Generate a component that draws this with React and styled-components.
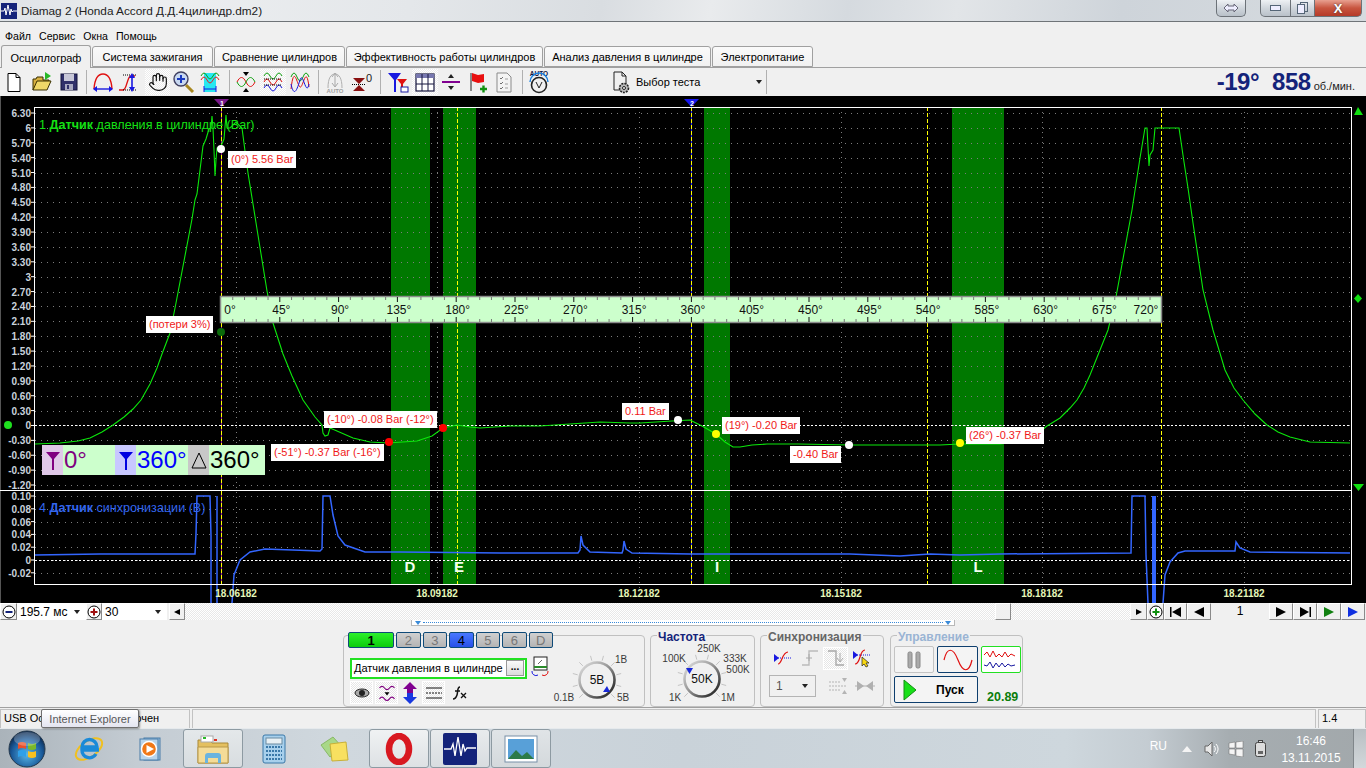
import React from "react";
import styled, { createGlobalStyle } from "styled-components";
import { Hand } from "lucide-react";

const GlobalStyle = createGlobalStyle`
  html, body { margin: 0; padding: 0; background: #f0f0f0; }
  body { font-family: "Liberation Sans", Arial, sans-serif; font-size: 11px; color: #000; overflow: hidden; }
  * { box-sizing: border-box; }
  svg { display: block; }
`;

const Window = styled.div`
  width: 1366px;
  height: 768px;
  display: flex;
  flex-direction: column;
  position: relative;
  overflow: hidden;
  background: #f0f0f0;
`;

// * Title bar
const TitleBar = styled.div`
  height: 22px;
  display: flex;
  align-items: flex-start;
  border-bottom: 1px solid #6f7478;
  background: linear-gradient(100deg, #dfe3e7 0%, #eceef0 12%, #e4e7ea 30%, #d9dde1 44%, #e9ebed 52%, #d5dadf 62%, #e2e5e8 70%, #ced4da 82%, #d6dbdf 100%);
`;
const AppLogo = styled.div`
  width: 16px;
  height: 16px;
  margin: 3px 4px 0 1px;
  background: #14237a;
`;
const TitleText = styled.div`
  flex: 1;
  font-size: 11.8px;
  line-height: 22px;
  color: #222;
`;
const GlassBtn = styled.div`
  height: 17px;
  width: ${(p) => p.$w}px;
  display: flex;
  align-items: center;
  justify-content: center;
  background: ${(p) => p.$close
    ? "linear-gradient(#e8a090, #c8553f 50%, #b53a28)"
    : "linear-gradient(#eef1f4, #d0d6dc 50%, #b9c1c9)"};
  border: 1px solid #6c7278;
  border-top: 0;
  border-left-width: ${(p) => (p.$joined ? 0 : 1)}px;
  border-radius: ${(p) => p.$radius || "0 0 4px 4px"};
  color: #fff;
  font-size: 13px;
  font-weight: 700;
  text-shadow: 0 0 2px #333;
`;
const Gap = styled.div`
  width: ${(p) => p.$w}px;
  flex: none;
`;

// * Menu + tabs
const MenuBar = styled.div`
  height: 23px;
  display: flex;
  align-items: center;
  padding: 4px 0 0 5px;
  gap: 8px;
  font-size: 10.6px;
`;
const TabRow = styled.div`
  height: 23px;
  display: flex;
  align-items: flex-end;
  padding-left: 1px;
  gap: 1px;
  border-bottom: 1px solid #a0a0a0;
`;
const Tab = styled.div`
  width: ${(p) => p.$w}px;
  height: ${(p) => (p.$active ? 23 : 21)}px;
  margin-bottom: ${(p) => (p.$active ? -1 : 0)}px;
  display: flex;
  align-items: center;
  justify-content: center;
  padding-top: 1px;
  font-size: 11px;
  background: ${(p) => (p.$active ? "#f0f0f0" : "linear-gradient(#fafafa, #f1f1f1)")};
  border: 1px solid #a0a0a0;
  border-bottom: ${(p) => (p.$active ? "0" : "1px solid #a0a0a0")};
  border-radius: 3px 3px 0 0;
  position: relative;
`;

// * Toolbar
const Toolbar = styled.div`
  height: 28px;
  display: flex;
  align-items: center;
  background: #f0f0f0;
`;
const ToolBtn = styled.div`
  width: ${(p) => p.$w}px;
  margin-left: ${(p) => p.$ml || 0}px;
  height: 26px;
  flex: none;
  display: flex;
  align-items: center;
  justify-content: center;
  background: ${(p) => (p.$on ? "repeating-conic-gradient(#fff 0 25%, #ececec 0 50%) 0 0 / 2px 2px" : "transparent")};
`;
const ToolSep = styled.div`
  width: ${(p) => p.$w || 10}px;
  height: 24px;
  flex: none;
  position: relative;
  &::after {
    content: "";
    position: absolute;
    left: 50%;
    top: 0;
    bottom: 0;
    border-left: 1px solid #b0b0b0;
  }
`;
const TestSelect = styled.div`
  width: 158px;
  margin-left: 56px;
  display: flex;
  align-items: center;
  gap: 3px;
  padding-left: 2px;
  font-size: 11px;
`;
const Caret = styled.div`
  margin-left: ${(p) => p.$ml || 0}px;
  border-left: 3px solid transparent;
  border-right: 3px solid transparent;
  border-top: 4px solid #222;
`;
const Rpm = styled.div`
  margin-left: auto;
  padding-right: 11px;
  display: flex;
  align-items: baseline;
  color: #14237a;
  font-size: 24px;
  font-weight: 700;
  letter-spacing: -0.5px;
`;
const RpmUnit = styled.span`
  font-size: 11px;
  font-weight: 400;
  letter-spacing: 0;
  margin-left: 3px;
  color: #222;
`;
const RpmValue = styled.span`
  margin-left: ${(p) => p.$ml || 0}px;
`;

// * Oscilloscope canvas
const Scope = styled.div`
  height: 507px;
  position: relative;
  background: #000;
  flex: none;
  border-left: 1px solid #555;
`;
const ChartSvg = styled.svg`
  position: absolute;
  left: -1px;
  top: 0;
`;
const Placed = styled.div.attrs((p) => ({ style: { left: p.$x - 1, top: p.$y - 96 } }))`
  position: absolute;
  white-space: nowrap;
`;
const AxisLabel = styled(Placed)`
  width: 31px;
  text-align: right;
  transform: translateY(-50%);
  font-size: 10px;
  font-weight: 700;
  color: #c9d2dc;
`;
const TimeLabel = styled(Placed)`
  transform: translate(-50%, -50%);
  font-size: 10px;
  font-weight: 700;
  color: #e4f6b8;
`;
const ChannelTitle = styled(Placed)`
  transform: translateY(-50%);
  font-size: 12.6px;
  color: ${(p) => p.$color};
`;
const BandLetter = styled(Placed)`
  transform: translate(-50%, -50%);
  font-size: 15px;
  font-weight: 700;
  color: #f2fff0;
`;
const Callout = styled(Placed)`
  height: 17px;
  padding: 0 3px;
  line-height: 17px;
  background: #fff;
  color: #f01818;
  font-size: 11px;
`;
const RulerLabel = styled(Placed)`
  transform: translate(-50%, -50%);
  font-size: 12px;
  color: #111;
`;
const MarkerTag = styled(Placed)`
  transform: translateX(-50%);
  font-size: 7px;
  font-weight: 700;
  line-height: 7px;
  color: #fff;
`;
const InfoBox = styled(Placed)`
  display: flex;
  height: 30px;
  width: 223px;
  background: #ccffcc;
  font-size: 24px;
  line-height: 29px;
`;
const InfoIcon = styled.div`
  width: 21px;
  flex: none;
  display: flex;
  align-items: center;
  justify-content: center;
  background: ${(p) => p.$bg};
`;
const InfoValue = styled.div`
  width: ${(p) => p.$w}px;
  flex: none;
  padding-left: 1px;
  color: ${(p) => p.$color};
`;

// * Scroll row
const ScrollRow = styled.div`
  height: 17px;
  flex: none;
  display: flex;
  background: #f0f0f0;
  font-size: 11.2px;
`;
const ScrollBtn = styled.div`
  width: ${(p) => p.$w}px;
  flex: none;
  display: flex;
  align-items: center;
  justify-content: center;
  background: #f0f0f0;
  border-right: 1px solid #8a8a8a;
  border-bottom: 1px solid #8a8a8a;
  border-top: 1px solid #fff;
  border-left: 1px solid #fff;
`;
const ScrollCombo = styled.div`
  width: ${(p) => p.$w}px;
  flex: none;
  display: flex;
  align-items: center;
  justify-content: space-between;
  padding: 0 6px 0 3px;
  background: #fff;
  font-size: 12px;
`;
const Track = styled.div`
  width: ${(p) => p.$w}px;
  flex: none;
  background: repeating-conic-gradient(#e8e8e8 0 25%, #fff 0 50%) 0 0 / 2px 2px;
`;
const PageNum = styled.div`
  width: 58px;
  flex: none;
  text-align: center;
  line-height: 17px;
  font-size: 12px;
  background: #f0f0f0;
`;

// * Control panel
const Controls = styled.div`
  height: 88px;
  flex: none;
  display: flex;
  flex-direction: column;
  border-bottom: 1px solid #a0a0a0;
`;
const BlueStrip = styled.div`
  width: 544px;
  height: 6px;
  margin-left: 411px;
  flex: none;
  display: flex;
  align-items: center;
  justify-content: space-between;
  padding: 0 3px;
  background: #fff;
  border: 1px solid #b8b8b8;
  border-top: 0;
`;
const StripDots = styled.div`
  flex: 1;
  margin: 0 2px;
  border-top: 1px dotted #3a8ad8;
`;
const StripArrow = styled.div`
  border-left: 3px solid transparent;
  border-right: 3px solid transparent;
  border-top: 4px solid #3a8ad8;
`;
const GroupRow = styled.div`
  display: flex;
  margin: 9px 0 0 343px;
`;
const Group = styled.div`
  width: ${(p) => p.$w}px;
  margin-left: ${(p) => p.$ml || 0}px;
  height: 72px;
  flex: none;
  position: relative;
  display: flex;
  border: 1px solid #c0c0c0;
  border-radius: 4px;
`;
const Legend = styled.div`
  position: absolute;
  left: ${(p) => p.$x}px;
  top: -5px;
  padding: 0 1px;
  height: 12px;
  line-height: 12px;
  background: #f0f0f0;
  font-size: 12px;
  font-weight: 700;
  color: ${(p) => p.$color};
`;
const ChannelCol = styled.div`
  width: 209px;
  flex: none;
  padding-left: 4px;
  margin-top: -4px;
  display: flex;
  flex-direction: column;
`;
const ChannelRow = styled.div`
  display: flex;
  gap: 2px;
`;
const ChannelBtn = styled.div`
  width: ${(p) => p.$w || 25}px;
  height: 16px;
  display: flex;
  align-items: center;
  justify-content: center;
  border: 1px solid #0e4a78;
  border-radius: 2px;
  font-size: 13px;
  font-weight: ${(p) => (p.$bold ? 700 : 400)};
  color: ${(p) => p.$ink};
  background: ${(p) => p.$bg};
`;
const ComboRow = styled.div`
  display: flex;
  align-items: center;
  margin: 8px 0 0 2px;
  gap: 3px;
`;
const ChannelCombo = styled.div`
  width: 177px;
  height: 21px;
  display: flex;
  align-items: center;
  justify-content: space-between;
  padding: 0 1px 0 2px;
  background: #fff;
  border: 2px solid #22e022;
  font-size: 11px;
  white-space: nowrap;
`;
const DotsBtn = styled.div`
  width: 18px;
  height: 16px;
  flex: none;
  text-align: center;
  font-size: 10px;
  font-weight: 700;
  line-height: 11px;
  background: linear-gradient(#fafafa, #dcdcdc);
  border: 1px solid #999;
`;
const IconRow = styled.div`
  display: flex;
  align-items: center;
  margin: 1px 0 0 2px;
  gap: 2px;
`;
const IconCell = styled.div`
  width: ${(p) => p.$w || 23}px;
  height: 23px;
  flex: none;
  display: flex;
  align-items: center;
  justify-content: center;
  background: ${(p) => (p.$on ? "repeating-conic-gradient(#fff 0 25%, #e6e6e6 0 50%) 0 0 / 2px 2px" : "transparent")};
  border: ${(p) => (p.$on ? "1px solid #fff" : "0")};
`;
const DialBox = styled.div`
  width: ${(p) => p.$w}px;
  height: ${(p) => p.$h}px;
  flex: none;
  position: relative;
  margin: ${(p) => p.$m};
`;
const DialText = styled.div.attrs((p) => ({ style: { left: p.$x, top: p.$y } }))`
  position: absolute;
  transform: translate(-50%, -50%);
  font-size: ${(p) => p.$size || 10}px;
  color: ${(p) => p.$color || "#3a3a3a"};
  white-space: nowrap;
`;
const SyncCol = styled.div`
  flex: 1;
  display: flex;
  flex-direction: column;
  padding: 11px 0 0 8px;
  gap: 6px;
`;
const SyncRow = styled.div`
  display: flex;
  align-items: center;
  height: 22px;
  gap: ${(p) => p.$gap || 0}px;
`;
const SyncCombo = styled.div`
  width: 47px;
  height: 22px;
  margin-right: 8px;
  display: flex;
  align-items: center;
  justify-content: space-between;
  padding: 0 7px 0 6px;
  border: 1px solid #b4b4b4;
  font-size: 12px;
  color: #555;
`;
const RunCol = styled.div`
  display: flex;
  flex-direction: column;
  padding: 10px 0 0 3px;
  gap: 3px;
`;
const RunRow = styled.div`
  display: flex;
  align-items: flex-end;
  gap: 3px;
`;
const RunBtn = styled.div`
  width: ${(p) => p.$w}px;
  height: 27px;
  display: flex;
  align-items: center;
  justify-content: center;
  background: ${(p) => p.$bg || "#f4f4f4"};
  border: 1px solid ${(p) => p.$border || "#c4c4c4"};
  border-radius: 2px;
`;
const StartBtn = styled(RunBtn)`
  justify-content: flex-start;
  padding-left: 8px;
  gap: 19px;
  font-size: 12px;
  font-weight: 700;
`;
const Timer = styled.div`
  margin: 0 0 -2px 6px;
  font-size: 12.5px;
  font-weight: 700;
  color: #0a7d0a;
  line-height: 15px;
`;

// * Status bar + taskbar
const StatusBar = styled.div`
  height: 20px;
  flex: none;
  display: flex;
  gap: 2px;
  padding-top: 1px;
  font-size: 11px;
`;
const StatusCell = styled.div`
  width: ${(p) => p.$w}px;
  flex: ${(p) => (p.$grow ? 1 : "none")};
  padding: 2px 0 0 3px;
  border: 1px solid #c2c2c2;
  border-bottom: 0;
`;
const Tooltip = styled.div`
  position: absolute;
  left: 41px;
  top: 709px;
  width: 98px;
  height: 19px;
  display: flex;
  align-items: center;
  justify-content: center;
  background: linear-gradient(#fff, #e4e5f0);
  border: 1px solid #6f6f6f;
  border-radius: 2px;
  box-shadow: 1px 1px 2px rgba(0, 0, 0, 0.4);
  color: #575757;
  font-size: 11px;
  z-index: 3;
`;
const Taskbar = styled.div`
  height: 40px;
  flex: none;
  display: flex;
  align-items: stretch;
  gap: 1px;
  border-top: 1px solid #e6eaed;
  background: linear-gradient(90deg, #aab3ba 0%, #c4ccd3 10%, #d0d8de 25%, #c9d2d9 50%, #ced7dd 78%, #c4ccd2 84%, #a6adb1 90%, #a2a8ab 100%);
`;
const StartArea = styled.div`
  width: 58px;
  flex: none;
  display: flex;
  align-items: center;
  padding-left: 8px;
`;
const TaskBtn = styled.div`
  width: 60px;
  flex: none;
  margin-left: ${(p) => p.$ml || 0}px;
  display: flex;
  align-items: center;
  justify-content: center;
  border-radius: 3px;
  border: ${(p) => (p.$open ? "1px solid #8d9aa2" : "1px solid transparent")};
  background: ${(p) => p.$bg || "transparent"};
`;
const Tray = styled.div`
  margin-left: auto;
  display: flex;
  align-items: center;
  color: #fff;
`;
const TrayLang = styled.div`
  font-size: 12px;
  margin-right: 15px;
  margin-top: -6px;
`;
const TrayIcon = styled.div`
  width: ${(p) => p.$w}px;
  display: flex;
  justify-content: center;
`;
const Clock = styled.div`
  width: 80px;
  margin: 2px 0 0 -1px;
  text-align: center;
  font-size: 12px;
  line-height: 17px;
`;
const ShowDesktop = styled.div`
  width: 13px;
  align-self: stretch;
  margin-left: 2px;
  border-left: 1px solid #80868a;
  background: linear-gradient(#b9bfc3, #d3d8db);
`;

// ? Chart data: everything is in page pixels, the svg viewBox starts at y=96
const pressureAxis = ["6.30", "6", "5.70", "5.40", "5.10", "4.80", "4.50", "4.20", "3.90", "3.60", "3.30", "3", "2.70", "2.40", "2.10", "1.80", "1.50", "1.20", "0.90", "0.60", "0.30", "0", "-0.30", "-0.60", "-0.90", "-1.20"];
const syncAxis = ["0.10", "0.08", "0.06", "0.04", "0.02", "0", "-0.02"];
const pressureY = (i) => 113 + i * 14.88;
const syncY = (i) => 496 + i * 12.8;
const gridX = [236, 437, 639, 841, 1042, 1244];
const timeLabels = ["18.06182", "18.09182", "18.12182", "18.15182", "18.18182", "18.21182"];
const bands = [[391, 39], [443, 33], [704, 26], [952, 52]];
const letters = [["D", 410], ["E", 459], ["I", 717], ["L", 978]];

const pressureTrace = "35,444 60,443 78,441 90,438 102,432 113,425 124,417 133,409 141,400 150,384 157,368 162,354 170,333 176,303 192,219 195,200 197,194 203,146 206,139 209,129 211,128 212,116 213,128 214,150 215,176 216,160 217,148 219,147 221,146 224,139 226,115 227,128 230,128 236,122 242,128 245,151 248,173 257,229 267,291 273,323 283,354 292,376 303,400 315,417 322,425 323,433 325,436 328,435 330,428 337,431 353,438 370,442 388,443 417,441 432,436 443,428 457,425 470,427 480,428 510,426 540,426 570,424 600,422 630,423 640,423 672,421 690,420 702,426 716,434 725,442 733,447 740,447 752,445 767,444 798,444 850,445 940,445 960,444 1000,444 1030,440 1047,426 1060,418 1070,408 1077,400 1084,388 1090,375 1100,350 1108,330 1116,297 1132,210 1140,158 1145,128 1147,128 1148,147 1149,166 1150,155 1153,150 1155,128 1179,128 1184,162 1188,188 1193,223 1203,290 1213,330 1225,370 1234,388 1243,400 1255,414 1267,425 1278,432 1290,437 1310,442 1350,443";
const syncTrace = "35,555 100,554 195,554 196,534 197,496 210,496 211,536 211,603";
const syncTrace2 = "217,496 217,603";
const syncTrace3 = "232,603 234,575 240,560 250,552 265,549 320,551 322,549 323,496 330,496 333,515 338,536 345,545 365,552 400,552 500,553 578,553 580,550 581,536 583,545 590,552 622,553 623,550 624,541 626,549 632,553 690,554 800,554 850,554 900,556 930,554 960,555 1000,554 1131,553 1132,496 1145,496 1146,555 1148,603";
const syncTrace4 = "1163,603 1165,575 1170,562 1178,553 1185,551 1235,551 1236,542 1240,548 1250,552 1350,553";

const dots = [[221, 149, "#fff"], [221, 332, "#0a6a0a"], [389, 442, "#f00"], [443, 428, "#f00"], [678, 420, "#fff"], [716, 434, "#ff0"], [849, 445, "#fff"], [960, 443, "#ff0"], [8, 425, "#1fe01f"]];

const callouts = [
  ["(0°) 5.56 Bar", 228, 151],
  ["(потери 3%)", 146, 316],
  ["(-10°) -0.08 Bar (-12°)", 324, 411],
  ["(-51°) -0.37 Bar (-16°)", 271, 444],
  ["0.11 Bar", 622, 403],
  ["(19°) -0.20 Bar", 722, 417],
  ["-0.40 Bar", 790, 446],
  ["(26°) -0.37 Bar", 966, 427],
];

function Oscillogram() {
  const ticks = [];
  for (let i = 1; i < 80; i++) ticks.push(221 + i * 11.76);
  return (
    <ChartSvg width="1366" height="507" viewBox="0 96 1366 507">
      {bands.map(([x, w]) => (
        <rect key={x} x={x} y="107" width={w} height="477" fill="#007800" />
      ))}
      {pressureAxis.map((_, i) => (
        <line key={i} x1="35" x2="1350" y1={Math.round(pressureY(i)) + 0.5} y2={Math.round(pressureY(i)) + 0.5} stroke="#7c7c7c" strokeDasharray="1 5" />
      ))}
      {syncAxis.map((_, i) => (
        <line key={i} x1="35" x2="1350" y1={Math.round(syncY(i)) + 0.5} y2={Math.round(syncY(i)) + 0.5} stroke="#7c7c7c" strokeDasharray="1 5" />
      ))}
      {gridX.map((x) => (
        <line key={x} x1={x + 0.5} x2={x + 0.5} y1="107" y2="590" stroke="#7c7c7c" strokeDasharray="1 4" />
      ))}
      <line x1="35" x2="1350" y1="425.5" y2="425.5" stroke="#fff" strokeDasharray="2 2" />
      <line x1="35" x2="1350" y1="560.5" y2="560.5" stroke="#fff" strokeDasharray="2 2" />
      <line x1="221.5" x2="221.5" y1="107" y2="584" stroke="#9a1aa0" />
      <line x1="691.5" x2="691.5" y1="107" y2="584" stroke="#2020ff" />
      {[221.5, 457.5, 691.5, 927.5, 1161.5].map((x) => (
        <line key={x} x1={x} x2={x} y1="107" y2="584" stroke="#ffff00" strokeDasharray="4 2" />
      ))}
      <polyline points={syncTrace} fill="none" stroke="#3366ff" strokeWidth="1.5" />
      <polyline points={syncTrace2} fill="none" stroke="#3366ff" strokeWidth="1.5" />
      <polyline points={syncTrace3} fill="none" stroke="#3366ff" strokeWidth="1.5" />
      <polyline points={syncTrace4} fill="none" stroke="#3366ff" strokeWidth="1.5" />
      <rect x="1152" y="496" width="4" height="107" fill="#3366ff" />
      <rect x="34" y="107" width="1317" height="477" fill="none" stroke="#fff" transform="translate(0.5 0.5)" />
      <line x1="0" x2="1351" y1="490.5" y2="490.5" stroke="#fff" />
      {pressureAxis.map((_, i) => (
        <line key={i} x1="31" x2="34" y1={pressureY(i)} y2={pressureY(i)} stroke="#fff" />
      ))}
      {syncAxis.map((_, i) => (
        <line key={i} x1="31" x2="34" y1={syncY(i)} y2={syncY(i)} stroke="#fff" />
      ))}
      <polyline points={pressureTrace} fill="none" stroke="#0be80b" strokeWidth="1.1" />
      <rect x="220.5" y="296.5" width="941" height="26" fill="#ccffcc" stroke="#8c8c8c" strokeWidth="1.5" />
      {ticks.map((x, i) => (
        <g key={i} stroke={(i + 1) % 5 === 0 ? "#111" : "#777"}>
          <line x1={x} x2={x} y1="297" y2={(i + 1) % 5 === 0 ? 302 : 300} />
          <line x1={x} x2={x} y1={(i + 1) % 5 === 0 ? 317 : 319} y2="322" />
        </g>
      ))}
      {dots.map(([x, y, c]) => (
        <circle key={x + "-" + y} cx={x} cy={y} r="4" fill={c} />
      ))}
      <polygon points="214,99 229,99 221.5,107" fill="#7a1a8a" />
      <polygon points="684,99 699,99 691.5,107" fill="#1818f0" />
      <polygon points="1358,107 1354,115 1363,115" fill="#10e010" />
      <polygon points="1358,294 1362,298.5 1358,303 1354,298.5" fill="#10e010" />
      <polygon points="1353,484 1364,484 1358.5,491" fill="#10e010" />
    </ChartSvg>
  );
}

const FilterGlyph = ({ color }) => (
  <svg width="16" height="24" viewBox="0 0 16 24">
    <polygon points="1,4 15,4 9,11 9,22 7,22 7,11" fill={color} />
  </svg>
);

// * Toolbar drawings
const S = ({ children, w = 24, h = 24 }) => (
  <svg width={w} height={h} viewBox="0 0 24 24" fill="none">{children}</svg>
);
const wave = (y, a = 3) => `M3 ${y}q3 ${-a * 2} 6 0t6 0t6 0`;

const icons = {
  page: <S><path d="M6 3.5h8l4 4v14H6z" fill="#fff" stroke="#000" /><path d="M14 3.5v4h4" stroke="#000" /></S>,
  open: <S><path d="M3 9h3l1-2h6v3h6v2H8L3 20z" fill="#d8b040" stroke="#3a3000" /><path d="M3 20l4-9h14l-4 9z" fill="#f0d868" stroke="#3a3000" /><polygon points="15,2 21,6 15,10" fill="#28b828" /></S>,
  save: <S><rect x="4" y="4" width="16" height="16" fill="#30306a" stroke="#14143c" /><rect x="7" y="4" width="10" height="7" fill="#c8c8d8" /><rect x="8" y="14" width="8" height="6" fill="#a8a8c0" /><rect x="10" y="15" width="2" height="4" fill="#30306a" /></S>,
  bell: <S><path d="M3 19C4 5 9 4 12 4s8 1 9 15" stroke="#e01010" strokeWidth="1.4" /><path d="M3 19h18" stroke="#1818e0" strokeWidth="1.4" /><path d="M2 19l4-3v6zM22 19l-4-3v6z" fill="#1818e0" /></S>,
  sweep: <S><path d="M2 20h4c4 0 4-14 8-14h4" stroke="#e01010" strokeWidth="1.3" /><path d="M6 5h13M6 20h13" stroke="#000" strokeDasharray="1 1" /><path d="M15 5v15" stroke="#1818e0" strokeWidth="1.6" /><path d="M15 3l3 5h-6zM15 22l3-5h-6z" fill="#1818e0" /></S>,
  hand: <Hand size={20} color="#111" strokeWidth={1.4} />,
  zoom: <S><path d="M15 15l7 7" stroke="#a88820" strokeWidth="3" /><circle cx="10" cy="9" r="7" fill="#c8d8f0" stroke="#404060" strokeWidth="1.4" /><path d="M6 9h8M10 5v8" stroke="#1838c0" strokeWidth="2" /></S>,
  region: <S><rect x="6" y="3" width="12" height="19" fill="#28e8f0" /><path d={wave(6)} stroke="#10a010" /><path d={wave(10)} stroke="#e02020" /><path d="M6 19h12" stroke="#1818e0" /><path d="M6 16v6M18 16v6" stroke="#1818e0" /></S>,
  cross: <S><path d="M3 12c3-6 6-6 9 0s6 6 9 0" stroke="#e01010" /><path d="M3 12c3 6 6 6 9 0s6-6 9 0" stroke="#10a010" /><path d="M9 2h6l-3 4zM9 22h6l-3-4z" fill="#000" /></S>,
  stacked: <S><path d={wave(6)} stroke="#10a010" /><path d={wave(12)} stroke="#e01010" /><path d={wave(18)} stroke="#1818e0" /><path d="M3 9h18M3 15h18" stroke="#000" strokeDasharray="1 1" /></S>,
  overlay: <S><path d={wave(7, 4)} stroke="#10a010" /><path d="M3 19c3-26 6-4 9-2s6-24 9 0" stroke="#e01010" /><path d="M3 14c3 14 6 6 9-4s6 18 9 4" stroke="#1818e0" /></S>,
  auto: <S><path d="M5 18C5 8 8 4 12 4s7 4 7 14" stroke="#b0b0b0" /><path d="M12 4v12M9 7l3-4 3 4M9 13l3 4 3-4" stroke="#a8a8a8" /><text x="12" y="23" fontSize="6" fontFamily="Liberation Sans" fontWeight="700" textAnchor="middle" fill="#a0a0a0">AUTO</text></S>,
  zero: <S><path d="M3 8h12l-6 6zM3 21h12l-6-6z" fill="#8a1010" /><path d="M2 14.5h13" stroke="#000" strokeDasharray="1 1" /><text x="19" y="12" fontSize="11" fontFamily="Liberation Sans" textAnchor="middle" fill="#222">0</text></S>,
  funnel: <S><path d="M2 3h13l-5 7v12H8V10z" fill="#1818e0" /><path d="M11 9h10l-4 5v5h-2v-5z" fill="#e01010" /><rect x="15" y="17" width="7" height="5" fill="#fff" stroke="#1818a0" /></S>,
  table: <S><rect x="3" y="4" width="18" height="17" fill="#fff" stroke="#14143c" strokeWidth="1.2" /><rect x="3" y="4" width="18" height="4" fill="#7878b0" /><path d="M9 4v17M15 4v17M3 14h18" stroke="#14143c" /></S>,
  level: <S><path d="M3 12h18" stroke="#800090" strokeWidth="2" /><path d="M9 8h6l-3-4zM9 16h6l-3 4z" fill="#222" /></S>,
  flag: <S><path d="M6 3v18" stroke="#222" /><path d="M7 3l6 2 6-1v8l-6 1-6-2z" fill="#e81010" /><path d="M15 19h7M18.5 15.5v7" stroke="#109010" strokeWidth="2.4" /></S>,
  sheet: <S><path d="M5 3h10l4 4v15H5z" fill="#f4f4f4" stroke="#8a8a8a" /><path d="M8 8l1 1 2-2M8 13l1 1 2-2M8 18l1 1 2-2" stroke="#707070" /><path d="M13 9h3M13 14h3M13 18h3" stroke="#a0a0a0" /></S>,
  gauge: <S><text x="12" y="6" fontSize="6.5" fontFamily="Liberation Sans" fontWeight="700" textAnchor="middle" fill="#14143c">AUTO</text><circle cx="12" cy="15" r="7.5" stroke="#222" strokeWidth="1.6" /><path d="M3 12a9 9 0 0 1 18 0" stroke="#1880e0" strokeWidth="1.4" /><path d="M9 12l3 6 3-6" stroke="#222" /></S>,
  testPage: <S><path d="M5 2h8l4 4v9M5 2v18h6M13 2v4h4" stroke="#222" /><circle cx="15" cy="18" r="4.5" fill="#bbb" stroke="#222" strokeDasharray="2 1" strokeWidth="1.6" /><circle cx="15" cy="18" r="1.5" fill="#fff" stroke="#222" /></S>,
};

const toolbarLayout = [
  ["page", 28], ["open", 27], ["save", 27], null,
  ["bell", 26], ["sweep", 26], ["hand", 25, true, 3], ["zoom", 26], ["region", 28], null,
  ["cross", 24, false, 0], ["stacked", 26, true, 2], ["overlay", 26, false, 1], null,
  ["auto", 24], ["zero", 27, false, 1], null,
  ["funnel", 26], ["table", 26, true, 1], ["level", 25], ["flag", 26, false, 1], ["sheet", 26, false, 1], null,
  ["gauge", 24],
];

function Dial({ w, h, cx, cy, value, pointer, labels, m }) {
  const ticks = [];
  for (let a = 135; a <= 405; a += 30) {
    const r = (a * Math.PI) / 180;
    ticks.push([cx + Math.cos(r) * 20, cy + Math.sin(r) * 20, cx + Math.cos(r) * 25, cy + Math.sin(r) * 25]);
  }
  return (
    <DialBox $w={w} $h={h} $m={m}>
      <svg width={w} height={h}>
        <defs>
          <linearGradient id={`ring${cx}`} x1="0" y1="0" x2="1" y2="1">
            <stop offset="0" stopColor="#e4e4e4" />
            <stop offset="0.45" stopColor="#999" />
            <stop offset="1" stopColor="#111" />
          </linearGradient>
        </defs>
        {ticks.map((t, i) => (
          <line key={i} x1={t[0]} y1={t[1]} x2={t[2]} y2={t[3]} stroke="#c4c4c4" />
        ))}
        <circle cx={cx} cy={cy} r="17.5" fill="#f0f0f0" stroke={`url(#ring${cx})`} strokeWidth="2.6" />
        <polygon points={pointer} fill="#1828d8" />
      </svg>
      <DialText $x={cx} $y={cy} $size={12} $color="#111">{value}</DialText>
      {labels.map(([t, x, y]) => (
        <DialText key={t} $x={x} $y={y}>{t}</DialText>
      ))}
    </DialBox>
  );
}

const Play = ({ color = "#000", w = 10, h = 10 }) => (
  <svg width={w} height={h} viewBox="0 0 10 10"><polygon points="0,0 10,5 0,10" fill={color} /></svg>
);
const Back = ({ w = 10 }) => (
  <svg width={w} height="10" viewBox="0 0 10 10"><polygon points="10,0 0,5 10,10" fill="#000" /></svg>
);
const First = () => (
  <svg width="11" height="10" viewBox="0 0 11 10"><rect width="1.5" height="10" fill="#000" /><polygon points="11,0 2,5 11,10" fill="#000" /></svg>
);
const Last = () => (
  <svg width="11" height="10" viewBox="0 0 11 10"><rect x="9.5" width="1.5" height="10" fill="#000" /><polygon points="0,0 9,5 0,10" fill="#000" /></svg>
);
const RoundBtn = ({ color, plus }) => (
  <svg width="14" height="14" viewBox="0 0 14 14">
    <circle cx="7" cy="7" r="6" fill="#fff" stroke="#000" />
    <path d={plus ? "M3.5 7h7M7 3.5v7" : "M3.5 7h7"} stroke={color} strokeWidth="2" />
  </svg>
);

export default function App() {
  return (
    <Window>
      <GlobalStyle />
      <TitleBar>
        <AppLogo>
          <svg width="16" height="16" viewBox="0 0 16 16"><path d="M0 8h3l1-3 1 7 2-10 2 10 1-6 1 3 1-1h4" stroke="#fff" fill="none" /></svg>
        </AppLogo>
        <TitleText>Diamag 2 (Honda Accord Д.Д.4цилиндр.dm2)</TitleText>
        <GlassBtn $w={30} $radius="0 0 5px 5px">
          <svg width="16" height="10" viewBox="0 0 16 10"><path d="M1 5l4-4v2h6V1l4 4-4 4V7H5v2z" fill="#eef" stroke="#667" /></svg>
        </GlassBtn>
        <Gap $w={14} />
        <GlassBtn $w={31} $radius="0 0 0 5px">
          <svg width="11" height="7"><rect x="0.5" y="0.5" width="10" height="5" fill="#eef" stroke="#567" /></svg>
        </GlassBtn>
        <GlassBtn $w={24} $joined $radius="0">
          <svg width="11" height="12"><rect x="3.5" y="0.5" width="7" height="9" fill="none" stroke="#567" /><rect x="0.5" y="2.5" width="7" height="9" fill="#eef" stroke="#567" /></svg>
        </GlassBtn>
        <GlassBtn $w={47} $joined $close $radius="0 0 5px 0">X</GlassBtn>
        <Gap $w={4} />
      </TitleBar>

      <MenuBar>
        <span>Файл</span><span>Сервис</span><span>Окна</span><span>Помощь</span>
      </MenuBar>

      <TabRow>
        <Tab $w={90} $active>Осциллограф</Tab>
        <Tab $w={121}>Система зажигания</Tab>
        <Tab $w={131}>Сравнение цилиндров</Tab>
        <Tab $w={197}>Эффективность работы цилиндров</Tab>
        <Tab $w={167}>Анализ давления в цилиндре</Tab>
        <Tab $w={101}>Электропитание</Tab>
      </TabRow>

      <Toolbar>
        {toolbarLayout.map((item, i) =>
          item === null ? (
            <ToolSep key={i} $w={i === 3 ? 8 : 10} />
          ) : (
            <ToolBtn key={i} $w={item[1]} $on={item[2]} $ml={item[3]}>
              {icons[item[0]]}
            </ToolBtn>
          )
        )}
        <TestSelect>
          {icons.testPage}
          <span>Выбор теста</span>
          <Caret $ml={53} />
        </TestSelect>
        <ToolSep $w={2} />
        <Rpm>
          <span>-19°</span>
          <RpmValue $ml={13}>858</RpmValue>
          <RpmUnit>об./мин.</RpmUnit>
        </Rpm>
      </Toolbar>

      <Scope>
        <Oscillogram />
        {pressureAxis.map((t, i) => (
          <AxisLabel key={t} $x={0} $y={pressureY(i)}>{t}</AxisLabel>
        ))}
        {syncAxis.map((t, i) => (
          <AxisLabel key={t} $x={0} $y={syncY(i)}>{t}</AxisLabel>
        ))}
        {timeLabels.map((t, i) => (
          <TimeLabel key={t} $x={gridX[i]} $y={593}>{t}</TimeLabel>
        ))}
        <ChannelTitle $x={39} $y={125} $color="#14e014">1 <b>Датчик</b> давления в цилиндре (Bar)</ChannelTitle>
        <ChannelTitle $x={39} $y={508} $color="#3366ee">4 <b>Датчик</b> синхронизации (В)</ChannelTitle>
        {letters.map(([t, x]) => (
          <BandLetter key={t} $x={x} $y={566}>{t}</BandLetter>
        ))}
        {Array.from({ length: 17 }, (_, i) => (
          <RulerLabel key={i} $x={i === 0 ? 230 : i === 16 ? 1146 : 222.5 + i * 58.8} $y={310}>{i * 45}°</RulerLabel>
        ))}
        {callouts.map(([t, x, y]) => (
          <Callout key={t} $x={x} $y={y}>{t}</Callout>
        ))}
        <MarkerTag $x={222} $y={100}>1</MarkerTag>
        <MarkerTag $x={692} $y={100}>2</MarkerTag>
        <InfoBox $x={42} $y={445}>
          <InfoIcon $bg="#e0c8e8"><FilterGlyph color="#800080" /></InfoIcon>
          <InfoValue $w={52} $color="#800080">0°</InfoValue>
          <InfoIcon $bg="#c8c8ff"><FilterGlyph color="#0000e0" /></InfoIcon>
          <InfoValue $w={52} $color="#0000ff">360°</InfoValue>
          <InfoIcon $bg="#c8c8c8">
            <svg width="16" height="20" viewBox="0 0 16 20"><polygon points="8,3 15,18 1,18" fill="none" stroke="#000" /></svg>
          </InfoIcon>
          <InfoValue $w={57} $color="#000">360°</InfoValue>
        </InfoBox>
      </Scope>

      <ScrollRow>
        <ScrollBtn $w={17}><RoundBtn color="#14237a" /></ScrollBtn>
        <ScrollCombo $w={69}>195.7 мс<Caret /></ScrollCombo>
        <ScrollBtn $w={16}><RoundBtn color="#a01010" plus /></ScrollBtn>
        <ScrollCombo $w={65}>30<Caret /></ScrollCombo>
        <Gap $w={2} />
        <ScrollBtn $w={16}><Back w={6} /></ScrollBtn>
        <Track $w={810} />
        <ScrollBtn $w={16} />
        <Track $w={119} />
        <ScrollBtn $w={17}><Play w={6} /></ScrollBtn>
        <ScrollBtn $w={17}><RoundBtn color="#109010" plus /></ScrollBtn>
        <ScrollBtn $w={23}><First /></ScrollBtn>
        <ScrollBtn $w={24}><Back /></ScrollBtn>
        <PageNum>1</PageNum>
        <ScrollBtn $w={24}><Play /></ScrollBtn>
        <ScrollBtn $w={24}><Last /></ScrollBtn>
        <ScrollBtn $w={24}><Play color="#108010" /></ScrollBtn>
        <ScrollBtn $w={24}><Play color="#1030e0" /></ScrollBtn>
      </ScrollRow>

      <Controls>
        <BlueStrip>
          <StripArrow /><StripDots /><StripArrow />
        </BlueStrip>
        <GroupRow>
          <Group $w={302}>
            <ChannelCol>
              <ChannelRow>
                <ChannelBtn $w={47} $bold $ink="#000" $bg="linear-gradient(#2cf02c, #0ccc0c)">1</ChannelBtn>
                {["2", "3"].map((t) => (
                  <ChannelBtn key={t} $ink="#777" $bg="linear-gradient(#d0d0d0, #b4b4b4)">{t}</ChannelBtn>
                ))}
                <ChannelBtn $ink="#000" $bg="linear-gradient(#4878ff, #2850e8)">4</ChannelBtn>
                {["5", "6", "D"].map((t) => (
                  <ChannelBtn key={t} $ink="#777" $bg="linear-gradient(#d0d0d0, #b4b4b4)">{t}</ChannelBtn>
                ))}
              </ChannelRow>
              <ComboRow>
                <ChannelCombo>Датчик давления в цилиндре<DotsBtn>...</DotsBtn></ChannelCombo>
                <svg width="20" height="24" viewBox="0 0 20 24">
                  <rect x="4" y="1" width="13" height="13" fill="#fff" stroke="#222" />
                  <path d="M4 11h13" stroke="#2a8a2a" strokeWidth="2" />
                  <path d="M8 8l4-4" stroke="#666" />
                  <path d="M2 15a4 4 0 0 0 6 4" stroke="#1818e0" fill="none" />
                  <path d="M18 15a4 4 0 0 1-6 4" stroke="#e01010" fill="none" />
                </svg>
              </ComboRow>
              <IconRow>
                <IconCell $on>
                  <svg width="16" height="12" viewBox="0 0 16 12"><ellipse cx="8" cy="6" rx="7" ry="4" fill="#aaa" stroke="#222" /><circle cx="8" cy="6" r="3" fill="#222" /></svg>
                </IconCell>
                <IconCell $on>
                  <svg width="20" height="20" viewBox="0 0 24 24" fill="none"><path d={wave(6, 2)} stroke="#800080" strokeWidth="1.4" /><path d={wave(19, 2)} stroke="#800080" strokeWidth="1.4" /><path d="M9 11h6l-3 4z" fill="#000" /></svg>
                </IconCell>
                <IconCell $w={20}>
                  <svg width="18" height="22" viewBox="0 0 18 22"><polygon points="9,0 16,7 12,7 12,11 6,11 6,7 2,7" fill="#800090" /><polygon points="9,22 16,15 12,15 12,11 6,11 6,15 2,15" fill="#1838e0" /></svg>
                </IconCell>
                <IconCell $on>
                  <svg width="18" height="14" viewBox="0 0 18 14"><path d="M1 2h16M1 12h16" stroke="#111" /><path d="M1 7h16" stroke="#111" strokeDasharray="2 1" /></svg>
                </IconCell>
                <IconCell $w={25}>
                  <svg width="16" height="14" viewBox="0 0 16 14" fill="none"><path d="M8 1C5 1 6 6 5 9S3 13 1 13M3 5h5" stroke="#111" strokeWidth="1.5" /><path d="M9 7l5 5M14 7l-5 5" stroke="#111" strokeWidth="1.3" /></svg>
                </IconCell>
              </IconRow>
            </ChannelCol>
            <Dial
              w={85} h={62} cx={42} cy={35} m="9px 0 0 2px" value="5В"
              pointer="48,47 55,47 52,41"
              labels={[["1В", 66, 14], ["0.1В", 9, 52], ["5В", 68, 52]]}
            />
          </Group>

          <Group $w={105} $ml={5}>
            <Legend $x={6} $color="#14237a">Частота</Legend>
            <Dial
              w={97} h={62} cx={49} cy={35} m="8px 0 0 2px" value="50K"
              pointer="33,24 40,24 36.5,30"
              labels={[["100K", 21, 14], ["250K", 56, 4], ["333K", 82, 14], ["500K", 85, 25], ["1K", 22, 53], ["1M", 75, 53]]}
            />
          </Group>

          <Group $w={124} $ml={5}>
            <Legend $x={6} $color="#666">Синхронизация</Legend>
            <SyncCol>
              <SyncRow>
                <IconCell $w={27}><svg width="22" height="20" viewBox="0 0 22 20" fill="none"><path d="M2 10h18" stroke="#1818e0" strokeDasharray="1 1" /><path d="M2 6l5 4-5 4z" fill="#1818e0" /><path d="M6 16c4 0 4-12 10-12" stroke="#e01010" strokeWidth="1.2" /></svg></IconCell>
                <IconCell $w={27}><svg width="20" height="20" viewBox="0 0 20 20" fill="none"><path d="M2 17h7V3h9" stroke="#bbb" strokeWidth="1.4" /><path d="M6 10h6M9 6v7" stroke="#aaa" /></svg></IconCell>
                <IconCell $w={25} $on><svg width="20" height="20" viewBox="0 0 20 20" fill="none"><path d="M2 3h8v14h8" stroke="#a8a8a8" strokeWidth="1.4" /><path d="M14 5v9M11 10l3 4 3-4" stroke="#aaa" /></svg></IconCell>
                <IconCell $w={27}><svg width="22" height="20" viewBox="0 0 22 20" fill="none"><path d="M2 7h18" stroke="#1818e0" strokeDasharray="1 1" /><path d="M2 3l5 4-5 4z" fill="#1818e0" /><path d="M4 16c6 0 4-14 10-14" stroke="#e01010" strokeWidth="1.2" /><path d="M11 9l0 9 2-2 2 3 2-1-2-3h3z" fill="#f8d810" stroke="#222" strokeWidth="0.7" /></svg></IconCell>
              </SyncRow>
              <SyncRow>
                <SyncCombo>1<Caret /></SyncCombo>
                <IconCell $w={27}><svg width="20" height="18" viewBox="0 0 20 18" fill="none"><path d="M1 9h18M1 5h12M1 13h12" stroke="#b4b4b4" strokeDasharray="2 1" /><path d="M14 1h5l-2.500 4zM14 17h5l-2.500-4z" fill="#b4b4b4" /></svg></IconCell>
                <IconCell $w={27}><svg width="20" height="12" viewBox="0 0 20 12"><path d="M0 6h20" stroke="#b0b0b0" /><path d="M2 1l7 5-7 5zM18 1l-7 5 7 5z" fill="#b0b0b0" /></svg></IconCell>
              </SyncRow>
            </SyncCol>
          </Group>

          <Group $w={133} $ml={6}>
            <Legend $x={6} $color="#9ab4d4">Управление</Legend>
            <RunCol>
              <RunRow>
                <RunBtn $w={40}>
                  <svg width="14" height="18" viewBox="0 0 14 18"><rect x="1" y="1" width="4" height="16" rx="1.5" fill="#aaa" stroke="#888" /><rect x="9" y="1" width="4" height="16" rx="1.5" fill="#aaa" stroke="#888" /></svg>
                </RunBtn>
                <RunBtn $w={41} $border="#0e3f6e">
                  <svg width="30" height="22" viewBox="0 0 30 22" fill="none"><path d="M1 11c3-13 9-13 14 0s11 13 14 0" stroke="#e01010" strokeWidth="1.2" /></svg>
                </RunBtn>
                <RunBtn $w={40} $bg="#fff" $border="#22e022">
                  <svg width="36" height="24" viewBox="0 0 36 24" fill="none"><path d="M1 7l3-3 3 5 3-6 3 6 3-3 3 3 3-5 3 5 3-3 4 2" stroke="#e01010" /><path d="M1 17l3 1 3-4 3 6 3-5 3 4 3-4 3 4 3-3 3 2 4-1" stroke="#1818a0" /></svg>
                </RunBtn>
              </RunRow>
              <RunRow>
                <StartBtn $w={84} $border="#0e3f6e">
                  <svg width="14" height="22" viewBox="0 0 14 22"><polygon points="1,1 13,11 1,21" fill="#18e018" stroke="#109010" /></svg>
                  Пуск
                </StartBtn>
                <Timer>20.89</Timer>
              </RunRow>
            </RunCol>
          </Group>
        </GroupRow>
      </Controls>

      <StatusBar>
        <StatusCell $w={190}>USB Осциллограф подключен</StatusCell>
        <StatusCell $grow />
        <StatusCell $w={48}>1.4</StatusCell>
      </StatusBar>
      <Tooltip>Internet Explorer</Tooltip>

      <Taskbar>
        <StartArea>
          <svg width="38" height="38" viewBox="0 0 38 38">
            <defs>
              <radialGradient id="orb" cx="50%" cy="65%" r="60%">
                <stop offset="0" stopColor="#5ab8e8" />
                <stop offset="0.7" stopColor="#1a5a9a" />
                <stop offset="1" stopColor="#0c2c54" />
              </radialGradient>
            </defs>
            <circle cx="19" cy="19" r="18" fill="url(#orb)" stroke="#24384c" />
            <path d="M10 13q4-2 8 0v6q-4-2-8 0z" fill="#e8502a" />
            <path d="M20 13q4 2 8 0v6q-4 2-8 0z" fill="#7ab82a" />
            <path d="M10 21q4-2 8 0v6q-4-2-8 0z" fill="#30a0e8" />
            <path d="M20 21q4 2 8 0v6q-4 2-8 0z" fill="#f8c020" />
            <ellipse cx="19" cy="9" rx="13" ry="7" fill="#fff" opacity="0.25" />
          </svg>
        </StartArea>
        <TaskBtn>
          <svg width="32" height="32" viewBox="0 0 32 32" fill="none">
            <ellipse cx="16" cy="16" rx="15" ry="8" transform="rotate(-35 16 16)" stroke="#f0c020" strokeWidth="2" />
            <path d="M26 17H9a7.500 7.500 0 0 0 14 4M9 14a7.500 7.500 0 0 1 15 0z" stroke="#1a8ad8" strokeWidth="3.4" />
          </svg>
        </TaskBtn>
        <TaskBtn>
          <svg width="28" height="28" viewBox="0 0 28 28">
            <rect x="8" y="3" width="16" height="22" fill="#9cc4e4" stroke="#4a7ca8" />
            <rect x="4" y="4" width="18" height="21" fill="#b8d4ec" stroke="#4a7ca8" />
            <circle cx="13" cy="14" r="7.500" fill="#f07818" stroke="#fff" strokeWidth="1.4" />
            <polygon points="10.500,10 18,14 10.500,18" fill="#fff" />
          </svg>
        </TaskBtn>
        <TaskBtn $ml={2} $open $bg="linear-gradient(#e4e8ea, #d8dde0)">
          <svg width="34" height="32" viewBox="0 0 34 32">
            <path d="M2 7h12l2 3h16v20H2z" fill="#e4c060" stroke="#a88838" />
            <rect x="5" y="3" width="12" height="6" fill="#fff" stroke="#aaa" />
            <rect x="7" y="4" width="3" height="2" fill="#28b828" />
            <rect x="18" y="6" width="3" height="2" fill="#e03020" />
            <path d="M2 14h30v16H2z" fill="#f4dc98" stroke="#b89848" />
            <path d="M9 30v-7q0-3 3-3h10q3 0 3 3v7h-3v-5H12v5z" fill="#6ab4e0" />
          </svg>
        </TaskBtn>
        <TaskBtn>
          <svg width="24" height="30" viewBox="0 0 24 30">
            <rect x="1" y="1" width="22" height="28" rx="2" fill="#a8d0ec" stroke="#3a78a8" />
            <rect x="4" y="4" width="16" height="6" fill="#e8f0f4" stroke="#6a8aa0" />
            {[13, 17, 21, 25].map((y) => (
              <path key={y} d={`M4 ${y}h16`} stroke="#3a78a8" strokeWidth="2" strokeDasharray="2 1" />
            ))}
          </svg>
        </TaskBtn>
        <TaskBtn>
          <svg width="32" height="30" viewBox="0 0 32 30">
            <polygon points="2,11 14,3 24,14 11,23" fill="#a8d888" stroke="#88b868" />
            <polygon points="11,10 27,8 29,26 13,27" fill="#f8e060" stroke="#c8b038" />
          </svg>
        </TaskBtn>
        <TaskBtn $ml={3} $open $bg="linear-gradient(#f0f2f3, #dde1e4)">
          <svg width="28" height="32" viewBox="0 0 28 32"><ellipse cx="14" cy="16" rx="10" ry="13" fill="none" stroke="#d81820" strokeWidth="6.500" /></svg>
        </TaskBtn>
        <TaskBtn $open $bg="linear-gradient(#e8ebed, #d8dde0)">
          <svg width="34" height="32" viewBox="0 0 34 32">
            <rect width="34" height="32" rx="2" fill="#14237a" />
            <path d="M1 16h7l2-5 2 12 3-19 3 19 2-12 2 7 2-3h9" fill="none" stroke="#fff" strokeWidth="1.3" />
          </svg>
        </TaskBtn>
        <TaskBtn $open $bg="linear-gradient(#e0e4e7, #d4d9dc)">
          <svg width="34" height="28" viewBox="0 0 34 28">
            <rect x="1" y="1" width="32" height="26" fill="#fff" stroke="#7890a8" />
            <rect x="4" y="4" width="26" height="20" fill="#58a0d8" />
            <path d="M4 24l8-9 6 6 5-4 7 7z" fill="#2c7a48" />
          </svg>
        </TaskBtn>
        <Tray>
          <TrayLang>RU</TrayLang>
          <TrayIcon $w={10}>
            <svg width="10" height="6"><polygon points="5,0 10,6 0,6" fill="#f4f4f4" /></svg>
          </TrayIcon>
          <Gap $w={8} />
          <TrayIcon $w={24}>
            <svg width="17" height="16" viewBox="0 0 17 16" fill="none"><path d="M1 5h3l4-4v14l-4-4H1z" fill="#e8e8e8" stroke="#666" /><path d="M10 5a4 4 0 0 1 0 6M12 3a7 7 0 0 1 0 10" stroke="#fff" /></svg>
          </TrayIcon>
          <TrayIcon $w={24}>
            <svg width="16" height="16" viewBox="0 0 16 16"><path d="M1 2l6-1v6H1zM8 1l7-1v7H8zM1 8h6v6l-6-1zM8 8h7v8l-7-1z" fill="#f4f4f4" stroke="#666" strokeWidth="0.5" /></svg>
          </TrayIcon>
          <TrayIcon $w={24}>
            <svg width="11" height="17" viewBox="0 0 11 17"><rect x="3.500" y="0.500" width="4" height="2" fill="#ddd" stroke="#444" /><rect x="0.500" y="2.500" width="10" height="14" rx="2" fill="#ddd" stroke="#444" /><rect x="3" y="11" width="5" height="3" fill="#666" /></svg>
          </TrayIcon>
          <Clock>16:46<br />13.11.2015</Clock>
          <ShowDesktop />
        </Tray>
      </Taskbar>
    </Window>
  );
}
